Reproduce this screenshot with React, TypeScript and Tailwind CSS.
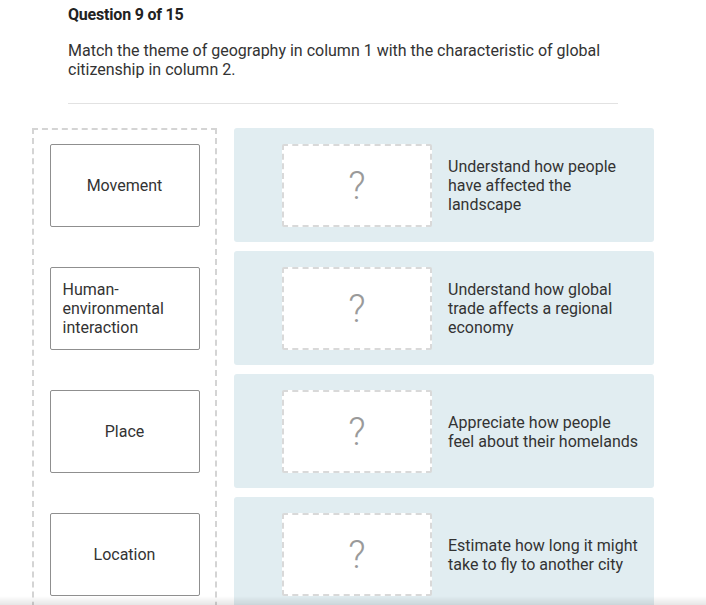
const THEMES = ["Movement", "Human-environmental interaction", "Place", "Location"];

const TRAITS = [
  "Understand how people have affected the landscape",
  "Understand how global trade affects a regional economy",
  "Appreciate how people feel about their homelands",
  "Estimate how long it might take to fly to another city",
];

function ThemeCard({ label }: { label: string }) {
  return (
    <div className="flex h-[83px] w-[150px] items-center justify-center rounded-[2px] border border-[#8f8f8f] bg-white px-3 text-[16px] leading-[19px] text-[#333]">
      <span>{label}</span>
    </div>
  );
}

function TraitRow({ text }: { text: string }) {
  return (
    <div className="flex h-[114px] w-[420px] shrink-0 items-start rounded-[3px] bg-[#e1edf1] pt-4 pl-12">
      <div className="flex h-[83px] w-[150px] shrink-0 items-center justify-center rounded-[2px] border-2 border-dashed border-[#d9d9d9] bg-white">
        <span className="text-[38px] font-light leading-none text-[#9a9a9a]">?</span>
      </div>
      <div className="flex h-[83px] flex-1 items-center pl-4 pr-4 text-[16px] leading-[19px] text-[#333]">
        {text}
      </div>
    </div>
  );
}

export default function App() {
  return (
    <div
      className="h-[605px] overflow-hidden bg-white"
      style={{ fontFamily: "Roboto, 'Liberation Sans', sans-serif" }}
    >
      <div className="pl-[68px] pt-[5px]">
        <h1 className="text-[16px] font-bold leading-[20px] tracking-[-0.2px] text-[#222]">
          Question 9 of 15
        </h1>
        <p className="mt-[16px] w-[550px] text-[16px] leading-[19px] text-[#333]">
          Match the theme of geography in column 1 with the characteristic of
          global citizenship in column 2.
        </p>
        <div className="mt-[24px] h-px w-[550px] bg-[#e2e2e2]" />
      </div>

      <div className="mt-[24px] flex gap-[17px] pl-[32px]">
        <div className="flex h-[520px] w-[185px] shrink-0 flex-col items-center gap-10 border-2 border-b-0 border-dashed border-[#d4d4d4] pt-[14px]">
          {THEMES.map((t) => (
            <ThemeCard key={t} label={t} />
          ))}
        </div>
        <div className="flex flex-col gap-[9px]">
          {TRAITS.map((t) => (
            <TraitRow key={t} text={t} />
          ))}
        </div>
      </div>

      <div className="fixed bottom-0 left-0 h-[9px] w-full bg-gradient-to-b from-transparent to-black/10" />
    </div>
  );
}
